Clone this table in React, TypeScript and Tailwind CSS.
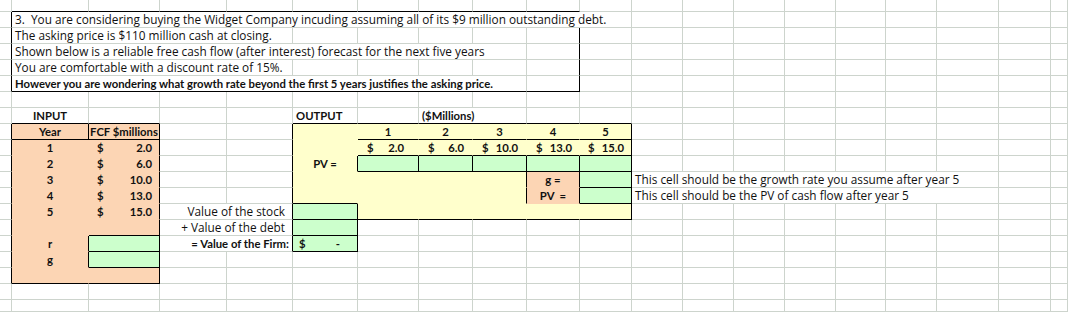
import React from "react";

type Bg = "w" | "o" | "y" | "g";
type Align = "l" | "c" | "r" | "a" | "n";

const spanCls: Record<number, string> = {
  1: "",
  2: "col-span-2",
  3: "col-span-3",
  4: "col-span-4",
  5: "col-span-5",
  6: "col-span-6",
  7: "col-span-7",
  8: "col-span-8",
  9: "col-span-9",
  10: "col-span-10",
};
const bgCls: Record<Bg, string> = {
  w: "bg-transparent",
  o: "bg-[#fcd5b4]",
  y: "bg-[#ffffcc]",
  g: "bg-[#ccffcc]",
};
const rGray: Record<Bg, string> = {
  w: "border-r-[#cdd4cd]",
  o: "border-r-[#fcd5b4]",
  y: "border-r-[#ffffcc]",
  g: "border-r-[#ccffcc]",
};
const bGray: Record<Bg, string> = {
  w: "border-b-[#cdd4cd]",
  o: "border-b-[#fcd5b4]",
  y: "border-b-[#ffffcc]",
  g: "border-b-[#ccffcc]",
};
const alignCls: Record<Align, string> = {
  l: "justify-start pl-[3px]",
  c: "justify-center",
  r: "justify-end pr-[3px]",
  a: "justify-between pl-[8px] pr-[7px]",
  n: "",
};

type C = {
  s?: number;
  bg?: Bg;
  rb?: boolean;
  bb?: boolean;
  al?: Align;
  b?: boolean;
  t?: React.ReactNode;
  x?: string;
};

function Cell({ s = 1, bg = "w", rb, bb, al = "l", b, t, x = "" }: C) {
  return (
    <div
      className={[
        "flex items-end overflow-visible whitespace-nowrap border-r border-b pb-[1px] leading-[13px]",
        spanCls[s],
        bgCls[bg],
        rb ? "border-r-black" : rGray[bg],
        bb ? "border-b-black" : bGray[bg],
        alignCls[al],
        b
          ? "font-['Lato',sans-serif] font-bold text-[11.3px]"
          : "font-['Open_Sans',sans-serif] font-normal text-[11.8px]",
        x,
      ].join(" ")}
    >
      {t}
    </div>
  );
}

const Acct = ({ v }: { v: string }) => (
  <>
    <span>$</span>
    <span>{v}</span>
  </>
);

function blank(n: number, extra: Partial<C> = {}): C[] {
  return Array.from({ length: n }, () => ({ ...extra }));
}

const rows: C[][] = [
  // R0 (12px)
  [{}, ...blank(9, { bb: true }), ...blank(10)],
  // R1
  [
    { rb: true },
    {
      s: 10,
      t: "3.  You are considering buying the Widget Company incuding assuming all of its $9 million outstanding debt.",
      x: "whitespace-pre",
    },
    ...blank(9),
  ],
  // R2
  [
    { rb: true },
    { s: 4, t: "The asking price is $110 million cash at closing." },
    {},
    {},
    {},
    {},
    { rb: true },
    ...blank(9),
  ],
  // R3
  [
    { rb: true },
    {
      s: 8,
      t: "Shown below is a reliable free cash flow (after interest) forecast for the next five years",
    },
    { rb: true },
    ...blank(9),
  ],
  // R4
  [
    { rb: true },
    { s: 4, t: "You are comfortable with a discount rate of 15%." },
    {},
    {},
    {},
    {},
    { rb: true },
    ...blank(9),
  ],
  // R5
  [
    { rb: true },
    {
      s: 8,
      bb: true,
      b: true,
      t: "However you are wondering what growth rate beyond the first 5 years justifies the asking price.",
    },
    { rb: true, bb: true },
    ...blank(9),
  ],
  // R6
  blank(19),
  // R7
  [
    {},
    { al: "c", b: true, bb: true, t: "INPUT" },
    { bb: true },
    {},
    {},
    { b: true, bb: true, t: "OUTPUT" },
    { bb: true },
    { s: 2, b: true, bb: true, t: "($Millions)" },
    { bb: true },
    { bb: true },
    ...blank(9),
  ],
  // R8
  [
    { rb: true },
    { bg: "o", rb: true, bb: true, al: "c", b: true, t: "Year" },
    { bg: "o", rb: true, bb: true, al: "c", b: true, t: "FCF $millions" },
    {},
    { rb: true },
    { bg: "y" },
    { bg: "y", bb: true, al: "c", b: true, t: "1" },
    { bg: "y", bb: true, al: "c", b: true, t: "2" },
    { bg: "y", bb: true, al: "c", b: true, t: "3" },
    { bg: "y", bb: true, al: "c", b: true, t: "4" },
    { bg: "y", bb: true, rb: true, al: "c", b: true, t: "5" },
    ...blank(9),
  ],
  // R9
  [
    { rb: true },
    { bg: "o", al: "c", b: true, t: "1" },
    { bg: "o", rb: true, al: "a", b: true, t: <Acct v="2.0" />, x: "pl-[7px] pr-[6px]" },
    {},
    { rb: true },
    { bg: "y" },
    { bg: "y", bb: true, al: "n", b: true, t: <Acct v="2.0" />, x: "justify-between pl-[9px] pr-[14px]" },
    { bg: "y", bb: true, al: "n", b: true, t: <Acct v="6.0" />, x: "justify-between pl-[9px] pr-[8px]" },
    { bg: "y", bb: true, al: "n", b: true, t: <Acct v="10.0" />, x: "justify-between pl-[9px] pr-[8px]" },
    { bg: "y", bb: true, al: "n", b: true, t: <Acct v="13.0" />, x: "justify-between pl-[9px] pr-[7px]" },
    { bg: "y", bb: true, rb: true, al: "n", b: true, t: <Acct v="15.0" />, x: "justify-between pl-[8px] pr-[7px]" },
    ...blank(9),
  ],
  // R10
  [
    { rb: true },
    { bg: "o", al: "c", b: true, t: "2" },
    { bg: "o", rb: true, al: "a", b: true, t: <Acct v="6.0" />, x: "pl-[7px] pr-[6px]" },
    {},
    { rb: true },
    { bg: "y", rb: true, al: "c", b: true, t: "PV =" },
    { bg: "g", rb: true, bb: true },
    { bg: "g", rb: true, bb: true },
    { bg: "g", rb: true, bb: true },
    { bg: "g", rb: true, bb: true },
    { bg: "g", rb: true, bb: true },
    ...blank(9),
  ],
  // R11
  [
    { rb: true },
    { bg: "o", al: "c", b: true, t: "3" },
    { bg: "o", rb: true, al: "a", b: true, t: <Acct v="10.0" />, x: "pl-[7px] pr-[6px]" },
    {},
    { rb: true },
    { bg: "y" },
    { bg: "y" },
    { bg: "y" },
    { bg: "y", rb: true },
    { bg: "o", rb: true, al: "c", b: true, t: "g =" },
    { bg: "g", rb: true, bb: true },
    { s: 7, t: "This cell should be the growth rate you assume after year 5" },
    {},
    {},
  ],
  // R12
  [
    { rb: true },
    { bg: "o", al: "c", b: true, t: "4" },
    { bg: "o", rb: true, al: "a", b: true, t: <Acct v="13.0" />, x: "pl-[7px] pr-[6px]" },
    {},
    { rb: true },
    { bg: "y", bb: true },
    { bg: "y" },
    { bg: "y" },
    { bg: "y", rb: true },
    { bg: "o", rb: true, al: "c", b: true, t: "PV\u00a0\u00a0=" },
    { bg: "g", rb: true, bb: true },
    { s: 7, t: "This cell should be the PV of cash flow after year 5" },
    {},
    {},
  ],
  // R13
  [
    { rb: true },
    { bg: "o", al: "c", b: true, t: "5" },
    { bg: "o", rb: true, al: "a", b: true, t: <Acct v="15.0" />, x: "pl-[7px] pr-[6px]" },
    { s: 2, rb: true, al: "r", t: "Value of the stock", x: "pr-[7px]" },
    { bg: "g", rb: true, bb: true },
    { bg: "y", bb: true },
    { bg: "y", bb: true },
    { bg: "y", bb: true },
    { bg: "y", bb: true },
    { bg: "y", bb: true, rb: true },
    ...blank(9),
  ],
  // R14
  [
    { rb: true },
    { bg: "o" },
    { bg: "o", rb: true, bb: true },
    { s: 2, rb: true, al: "r", t: "+ Value of the debt", x: "pr-[7px]" },
    { bg: "g", rb: true, bb: true },
    ...blank(14),
  ],
  // R15
  [
    { rb: true },
    { bg: "o", rb: true, al: "c", b: true, t: "r" },
    { bg: "g", rb: true, bb: true },
    { s: 2, rb: true, al: "r", b: true, t: "= Value of the Firm:", x: "pr-[3px]" },
    { bg: "g", rb: true, bb: true, al: "n", b: true, t: <><span>$</span><span>-</span></>, x: "justify-between pl-[6px] pr-[17px]" },
    ...blank(14),
  ],
  // R16
  [
    { rb: true },
    { bg: "o", rb: true, al: "c", b: true, t: "g" },
    { bg: "g", rb: true, bb: true },
    ...blank(17),
  ],
  // R17
  [
    { rb: true },
    { bg: "o", bb: true },
    { bg: "o", rb: true, bb: true },
    ...blank(17),
  ],
  // R18
  blank(20),
  // R19
  blank(20),
];

export default function App() {
  return (
    <div className="w-[1068px] h-[312px] overflow-hidden bg-white text-[#111111]">
      <div className="grid grid-cols-[12px_77px_71px_67px_66px_65px_61px_54px_54px_53px_52px_51px_51px_51px_51px_50px_51px_62px_52px_17px] grid-rows-[12px_repeat(18,16px)_12px]">
        {rows.map((r, i) => {
          const used = r.reduce((a, c) => a + (c.s ?? 1), 0);
          const cells = used < 20 ? [...r, ...blank(20 - used)] : r;
          return cells.map((c, j) => <Cell key={`${i}-${j}`} {...c} />);
        })}
      </div>
    </div>
  );
}
